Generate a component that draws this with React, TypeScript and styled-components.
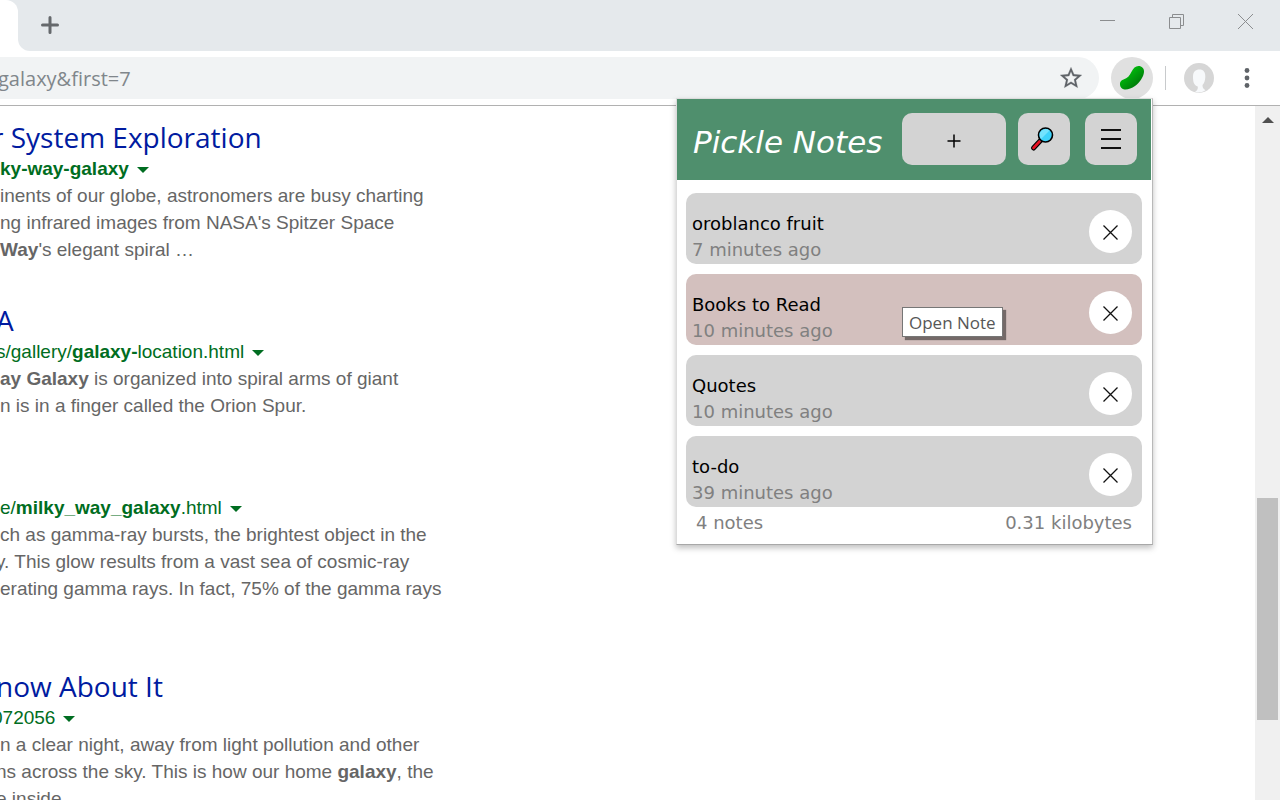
import React from "react";
import styled, { createGlobalStyle, css } from "styled-components";

const Global = createGlobalStyle`
  *, *::before, *::after { box-sizing: border-box; }
  body { margin: 0; background: #fff; font-family: "Liberation Sans", Arial, sans-serif; }
  button { font: inherit; color: inherit; padding: 0; border: 0; background: none; cursor: pointer; }
  a { color: inherit; text-decoration: none; }
  svg { display: block; }
`;

const uiFont = css`font-family: "Open Sans", "Segoe UI", sans-serif;`;

const Window = styled.div`
  position: relative;
  display: flex;
  flex-direction: column;
  height: 100vh;
  overflow: hidden;
`;

/* ---- browser frame ---- */

const TabStrip = styled.header`
  display: flex;
  flex: none;
  height: 51px;
  background: #fff;
`;

const ActiveTab = styled.div`
  width: 18px;
  background: #e5e9ec;
  &::before {
    content: "";
    display: block;
    height: 100%;
    background: #fff;
    border-top-right-radius: 12px;
  }
`;

const Strip = styled.div`
  flex: 1;
  display: flex;
  justify-content: space-between;
  align-items: flex-start;
  padding: 2px 15px 0 9px;
  background: #e5e9ec;
  border-bottom-left-radius: 12px;
`;

const IconButton = styled.button<{ $size: number }>`
  flex: none;
  display: grid;
  place-items: center;
  width: ${(p) => p.$size}px;
  height: ${(p) => p.$size}px;
`;

const MenuButton = styled(IconButton)`
  margin-left: 18px;
`;

const WindowControls = styled.div`
  display: flex;
  gap: 30px;
  color: #8b8d8f;
`;

const Toolbar = styled.div`
  flex: none;
  display: flex;
  align-items: center;
  height: 55px;
  padding-right: 18px;
  border-bottom: 1px solid #b1b1b1;
`;

const Omnibox = styled.div`
  flex: 1;
  display: flex;
  align-items: center;
  height: 42px;
  padding-right: 12px;
  border-radius: 0 21px 21px 0;
  background: #f1f3f4;
`;

const Address = styled.input`
  flex: 1;
  min-width: 0;
  height: 42px;
  padding: 0;
  border: 0;
  outline: 0;
  background: none;
  ${uiFont}
  font-size: 20px;
  text-indent: -2px;
  color: #80868b;
`;

const Extension = styled.button`
  flex: none;
  display: grid;
  place-items: center;
  width: 42px;
  height: 42px;
  margin: 0 12px;
  border-radius: 50%;
  background: #e0e0e0;
`;

const Divider = styled.span`
  width: 1px;
  height: 24px;
  margin-right: 18px;
  background: #c8cacc;
`;

/* ---- search results ---- */

const Page = styled.div`
  flex: 1;
  min-height: 0;
  display: flex;
`;

const Results = styled.main`
  flex: 1;
  min-width: 0;
  overflow: hidden;
  padding-top: 13px;
  white-space: nowrap;
`;

const Result = styled.article`
  margin-bottom: 39px;
  font-size: 19px;
  line-height: 27px;
  color: #666;
`;

const ResultTitle = styled.h2<{ $cut: number }>`
  margin: 0;
  height: 36px;
  ${uiFont}
  font-size: 28px;
  font-weight: 400;
  line-height: 36px;
  text-indent: ${(p) => -p.$cut}px;
  color: #001ba0;
`;

const UrlRow = styled.div`
  display: flex;
  align-items: center;
  gap: 8px;
  color: #006d21;
`;

const Url = styled.a<{ $cut: number }>`
  text-indent: ${(p) => -p.$cut}px;
`;

const Caret = styled.button`
  margin-top: 2px;
  border: solid transparent;
  border-width: 6px 6px 0;
  border-top-color: #006d21;
`;

const Line = styled.div<{ $cut: number }>`
  height: 27px;
  text-indent: ${(p) => -p.$cut}px;
`;

const Scrollbar = styled.div`
  flex: none;
  display: flex;
  flex-direction: column;
  align-items: stretch;
  width: 25px;
  padding: 0 2px;
  background: #f0f0f0;
`;

const ScrollUp = styled.button`
  display: grid;
  place-items: center;
  height: 27px;
`;

const Space = styled.div<{ $grow: number }>`
  flex: ${(p) => p.$grow};
`;

const Thumb = styled(Space)`
  background: #c0c0c0;
`;

/* ---- extension popup ---- */

const Popup = styled.section`
  position: absolute;
  top: 98px;
  right: 127px;
  width: 477px;
  border: 1px solid #dcdcdc;
  border-right-color: #b8b8b8;
  border-bottom-color: #a8a8a8;
  background: #fff;
  box-shadow: 0 3px 6px rgba(0, 0, 0, 0.25);
  font-family: "DejaVu Sans", Verdana, sans-serif;
  font-size: 18px;
  color: #000;
`;

const PopupHeader = styled.header`
  display: flex;
  align-items: center;
  height: 81px;
  margin-right: 1px;
  padding: 0 14px 0 16px;
  background: #4f8f6d;
`;

const PopupTitle = styled.h1`
  flex: 1;
  margin: 0;
  padding-top: 5px;
  font-size: 31px;
  font-weight: 400;
  font-style: italic;
  line-height: 36px;
  white-space: nowrap;
  color: #fff;
`;

const PopupActions = styled.div`
  display: flex;
  padding-bottom: 2px;
`;

const Action = styled.button<{ $wide?: boolean; $gap?: number }>`
  display: grid;
  place-items: center;
  width: ${(p) => (p.$wide ? 104 : 52)}px;
  height: 52px;
  margin-left: ${(p) => p.$gap ?? 0}px;
  border-radius: 10px;
  background: #d3d3d3;
`;

const Notes = styled.ul`
  display: flex;
  flex-direction: column;
  gap: 10px;
  margin: 0;
  padding: 13px 10px 0 9px;
  list-style: none;
`;

const Note = styled.li<{ $hover?: boolean }>`
  position: relative;
  display: flex;
  justify-content: space-between;
  align-items: center;
  height: 71px;
  padding: 0 10px 0 6px;
  border-radius: 10px;
  background: ${(p) => (p.$hover ? "#d3c0be" : "#d3d3d3")};
`;

const NoteText = styled.div`
  padding-top: 16px;
  line-height: 26px;
`;

const Age = styled.div`
  color: #808080;
`;

const Remove = styled.button`
  display: grid;
  place-items: center;
  width: 43px;
  height: 43px;
  margin-top: 5px;
  padding-top: 3px;
  border-radius: 50%;
  background: #fff;
`;

const Tooltip = styled.div`
  position: absolute;
  top: 33px;
  left: 216px;
  height: 30px;
  padding: 0 6px;
  border: 1px solid #767676;
  background: #fff;
  box-shadow: 3px 3px 1px rgba(0, 0, 0, 0.45);
  ${uiFont}
  font-size: 17px;
  line-height: 30px;
  white-space: nowrap;
  color: #575757;
`;

const PopupFooter = styled.footer`
  display: flex;
  justify-content: space-between;
  padding: 3px 20px 8px 19px;
  line-height: 26px;
  color: #808080;
`;

const results = [
  {
    title: "r System Exploration", titleCut: 8,
    url: <b>ky-way-galaxy</b>, urlCut: 0,
    lines: [
      { cut: 0, text: "inents of our globe, astronomers are busy charting" },
      { cut: 0, text: "ng infrared images from NASA's Spitzer Space" },
      { cut: 0, text: <><b>Way</b>'s elegant spiral …</> },
    ],
  },
  {
    title: "A", titleCut: 4,
    url: <>s/gallery/<b>galaxy-</b>location.html</>, urlCut: 4,
    lines: [
      { cut: 0, text: <><b>ay Galaxy</b> is organized into spiral arms of giant</> },
      { cut: 0, text: "n is in a finger called the Orion Spur." },
    ],
  },
  {
    title: "", titleCut: 0,
    url: <>e/<b>milky_way_galaxy</b>.html</>, urlCut: 0,
    lines: [
      { cut: 0, text: "ch as gamma-ray bursts, the brightest object in the" },
      { cut: 4, text: "y. This glow results from a vast sea of cosmic-ray" },
      { cut: 0, text: "erating gamma rays. In fact, 75% of the gamma rays" },
      { cut: 0, text: "" },
    ],
  },
  {
    title: "now About It", titleCut: 4,
    url: "072056", urlCut: 8,
    lines: [
      { cut: 0, text: "n a clear night, away from light pollution and other" },
      { cut: 4, text: <>ns across the sky. This is how our home <b>galaxy</b>, the</> },
      { cut: 4, text: "e inside." },
    ],
  },
];

const notes = [
  { name: "oroblanco fruit", age: "7 minutes ago" },
  { name: "Books to Read", age: "10 minutes ago", tip: "Open Note" },
  { name: "Quotes", age: "10 minutes ago" },
  { name: "to-do", age: "39 minutes ago" },
];

const PickleIcon = () => (
  <svg width="28" height="28" viewBox="0 0 28 28">
    <defs>
      <linearGradient id="pickle" x1="0.3" y1="0.3" x2="0.75" y2="0.8">
        <stop offset="0" stopColor="#00b80c" />
        <stop offset="1" stopColor="#007a0a" />
      </linearGradient>
    </defs>
    <path d="M2 21C1.600 18.500 3 16.400 5.500 15.600C9.500 14.300 11.500 12 13.500 7.800C15.200 4.300 17.500 2 20.500 2C23.800 2 26.300 4.500 26 8C25.500 13 21.500 19 17 22C13.500 24.400 9.500 25.800 6.500 25.400C4 25 2.400 23.500 2 21Z" fill="url(#pickle)" />
  </svg>
);

const AvatarIcon = () => (
  <svg width="30" height="30" viewBox="0 0 30 30">
    <circle cx="15" cy="15" r="15" fill="#d6d6d6" />
    <path d="M9 14C9 8.500 11.500 6.500 15.500 6.500S21.500 9 21.300 14C21.200 18 20 20.500 18.500 22C18.500 25 19.500 26 21.500 27.200C18 29.500 14.500 29.800 11 29C13.500 27.500 14 25.500 13.800 23.500C10 22.500 9 19 9 14Z" fill="#f7f9fb" />
  </svg>
);

const MagnifierIcon = () => (
  <svg width="30" height="26" viewBox="0 0 30 26">
    <path d="M4.500 22L12 14" stroke="#000" strokeWidth="5" strokeLinecap="round" />
    <path d="M4.500 22L10.500 15.500" stroke="#e81123" strokeWidth="2.600" strokeLinecap="round" />
    <path d="M11 15L13 13" stroke="#9a9a9a" strokeWidth="1.500" />
    <circle cx="16.500" cy="9" r="7" fill="#3fd3fa" stroke="#000" strokeWidth="1.600" />
    <path d="M10.700 9.500A6 6 0 0 1 20.500 4.500L12 13Q10.700 11.500 10.700 9.500Z" fill="#74e3fd" />
  </svg>
);

export default function App() {
  return (
    <>
      <Global />
      <Window>
        <TabStrip>
          <ActiveTab />
          <Strip>
            <IconButton $size={46} aria-label="New tab">
              <svg width="18" height="18" viewBox="0 0 18 18" stroke="#65696c" strokeWidth="3" strokeLinecap="round">
                <path d="M1.500 9H16.500M9 1.500V16.500" />
              </svg>
            </IconButton>
            <WindowControls>
              <IconButton $size={39} aria-label="Minimize">
                <svg width="15" height="15" viewBox="0 0 15 15" stroke="currentColor"><path d="M0 6.500H15" /></svg>
              </IconButton>
              <IconButton $size={39} aria-label="Restore">
                <svg width="15" height="15" viewBox="0 0 15 15" fill="none" stroke="currentColor">
                  <path d="M.5 3.500H11.500V14.500H.5ZM3.500 3.500V.5H14.500V11.500H11.500" />
                </svg>
              </IconButton>
              <IconButton $size={39} aria-label="Close">
                <svg width="15" height="15" viewBox="0 0 15 15" stroke="currentColor"><path d="M0 0L15 15M15 0L0 15" /></svg>
              </IconButton>
            </WindowControls>
          </Strip>
        </TabStrip>

        <Toolbar>
          <Omnibox>
            <Address aria-label="Address" defaultValue="galaxy&first=7" />
            <IconButton $size={32} aria-label="Bookmark">
              <svg width="26" height="26" viewBox="0 0 24 24" fill="#5f6368" stroke="#5f6368" strokeWidth=".2">
                <path d="M22 9.240l-7.190-.620L12 2 9.190 8.630 2 9.240l5.460 4.730L5.820 21 12 17.270 18.180 21l-1.630-7.030L22 9.240zM12 15.400l-3.760 2.270 1-4.280-3.320-2.880 4.380-.380L12 6.100l1.710 4.040 4.380.380-3.320 2.880 1 4.280L12 15.400z" />
              </svg>
            </IconButton>
          </Omnibox>
          <Extension aria-label="Pickle Notes"><PickleIcon /></Extension>
          <Divider />
          <IconButton $size={30} aria-label="Profile"><AvatarIcon /></IconButton>
          <MenuButton $size={30} aria-label="Menu">
            <svg width="6" height="20" viewBox="0 0 6 20" fill="#5f6368">
              <circle cx="3" cy="2.500" r="2.400" /><circle cx="3" cy="10" r="2.400" /><circle cx="3" cy="17.500" r="2.400" />
            </svg>
          </MenuButton>
        </Toolbar>

        <Page>
          <Results>
            {results.map((r, i) => (
              <Result key={i}>
                <ResultTitle $cut={r.titleCut}>{r.title && <a href="#result">{r.title}</a>}</ResultTitle>
                <UrlRow>
                  <Url href="#result" $cut={r.urlCut}>{r.url}</Url>
                  <Caret aria-label="More" />
                </UrlRow>
                {r.lines.map((l, j) => (
                  <Line key={j} $cut={l.cut}>{l.text}</Line>
                ))}
              </Result>
            ))}
          </Results>
          <Scrollbar>
            <ScrollUp aria-label="Scroll up">
              <svg width="12" height="6" viewBox="0 0 12 6" fill="#505050"><path d="M6 0L12 6H0Z" /></svg>
            </ScrollUp>
            <Space $grow={365} />
            <Thumb $grow={222} />
            <Space $grow={80} />
          </Scrollbar>
        </Page>

        <Popup>
          <PopupHeader>
            <PopupTitle>Pickle Notes</PopupTitle>
            <PopupActions>
              <Action $wide aria-label="New note">
                <svg width="14" height="18" viewBox="0 0 14 18" stroke="#000" strokeWidth="1.500"><path d="M.5 11H13.500M7 4.500V17.500" /></svg>
              </Action>
              <Action $gap={12} aria-label="Search"><MagnifierIcon /></Action>
              <Action $gap={15} aria-label="Options">
                <svg width="20" height="20" viewBox="0 0 20 20" stroke="#111" strokeWidth="2"><path d="M0 1H20M0 10H20M0 19H20" /></svg>
              </Action>
            </PopupActions>
          </PopupHeader>
          <Notes>
            {notes.map((n) => (
              <Note key={n.name} $hover={!!n.tip}>
                <NoteText>
                  {n.name}
                  <Age>{n.age}</Age>
                </NoteText>
                <Remove aria-label={`Delete ${n.name}`}>
                  <svg width="15" height="15" viewBox="0 0 15 15" stroke="#111" strokeWidth="1.300"><path d="M.5 .5L14.500 14.500M14.500 .5L.5 14.500" /></svg>
                </Remove>
                {n.tip && <Tooltip role="tooltip">{n.tip}</Tooltip>}
              </Note>
            ))}
          </Notes>
          <PopupFooter>
            <span>4 notes</span>
            <span>0.31 kilobytes</span>
          </PopupFooter>
        </Popup>
      </Window>
    </>
  );
}
